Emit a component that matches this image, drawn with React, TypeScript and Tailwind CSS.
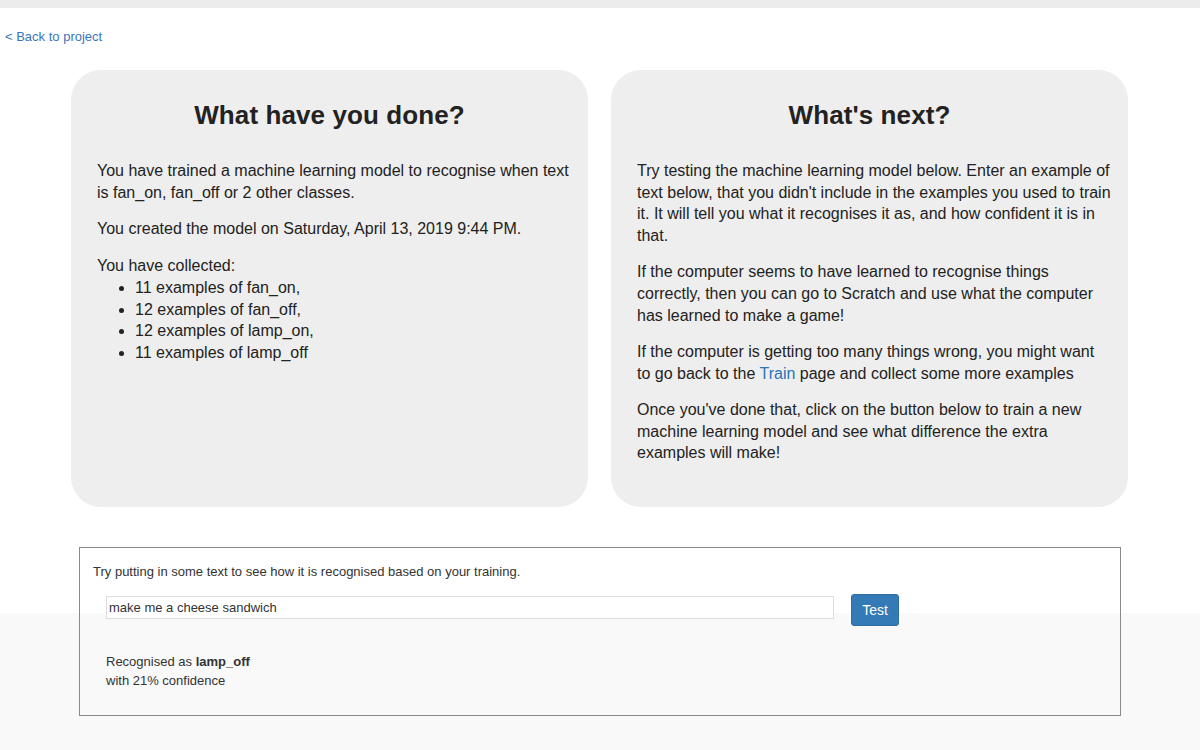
import React from "react";

export default function App() {
  return (
    <div
      className="min-h-[750px] w-[1200px] text-[#333] bg-[linear-gradient(to_bottom,#ffffff_0px,#ffffff_613px,#f9f9f9_613px,#f9f9f9_100%)]"
      style={{ fontFamily: '"Liberation Sans", Arial, Helvetica, sans-serif' }}
    >
      <div className="h-2 bg-[#ececec]" />
      <div className="mt-5 pl-[5px] text-[13px] leading-[18px]">
        <a href="#" className="text-[#3a76bd]">&lt; Back to project</a>
      </div>
      <div className="mt-6 flex gap-[23px] pl-[71px]">
        <div className="w-[517px] h-[437px] rounded-[30px] bg-[#eeeeee] pl-[26px] pr-[12px] pt-[30px]">
          <h2 className="pr-[14px] text-center text-[26px] leading-[30px] font-bold text-[#222] tracking-[0.1px]">What have you done?</h2>
          <div className="mt-[30px] text-[16px] leading-[22px] text-[#222]">
            <p className="mb-[14px]">You have trained a machine learning model to recognise when text<br />is fan_on, fan_off or 2 other classes.</p>
            <p className="mb-[15px]">You created the model on Saturday, April 13, 2019 9:44 PM.</p>
            <p>You have collected:</p>
            <ul className="list-disc pl-[38px] leading-[21.7px]">
              <li>11 examples of fan_on,</li>
              <li>12 examples of fan_off,</li>
              <li>12 examples of lamp_on,</li>
              <li>11 examples of lamp_off</li>
            </ul>
          </div>
        </div>
        <div className="w-[517px] h-[437px] rounded-[30px] bg-[#eeeeee] pl-[26px] pr-[12px] pt-[30px]">
          <h2 className="pr-[14px] text-center text-[26px] leading-[30px] font-bold text-[#222] tracking-[0.1px]">What's next?</h2>
          <div className="mt-[30px] text-[16px] leading-[21.7px] text-[#222]">
            <p className="mb-[14.5px]">Try testing the machine learning model below. Enter an example of<br />text below, that you didn't include in the examples you used to train<br />it. It will tell you what it recognises it as, and how confident it is in<br />that.</p>
            <p className="mb-[14.5px]">If the computer seems to have learned to recognise things<br />correctly, then you can go to Scratch and use what the computer<br />has learned to make a game!</p>
            <p className="mb-[14.5px]">If the computer is getting too many things wrong, you might want<br />to go back to the <a href="#" className="text-[#2a73b8]">Train</a> page and collect some more examples</p>
            <p>Once you've done that, click on the button below to train a new<br />machine learning model and see what difference the extra<br />examples will make!</p>
          </div>
        </div>
      </div>
      <div className="ml-[79px] mt-10 w-[1042px] h-[169px] border border-[#8a8a8a] pl-[13px] pt-[15px] text-[13px] text-[#333]">
        <div className="leading-[18px]">Try putting in some text to see how it is recognised based on your training.</div>
        <div className="mt-[15px] flex items-start pl-[13px]">
          <div className="w-[728px] h-[23px] border border-[#dddddd] bg-white px-[2px] leading-[21px] text-[13px] text-[#333]">make me a cheese sandwich</div>
          <button className="-mt-[2px] ml-[17px] w-[48px] h-[32px] rounded-[3px] border border-[#2e6da4] bg-[#337ab7] text-white text-[14px]">Test</button>
        </div>
        <div className="mt-[26px] pl-[13px] leading-[19px]">
          <div>Recognised as <b>lamp_off</b></div>
          <div>with 21% confidence</div>
        </div>
      </div>
    </div>
  );
}
